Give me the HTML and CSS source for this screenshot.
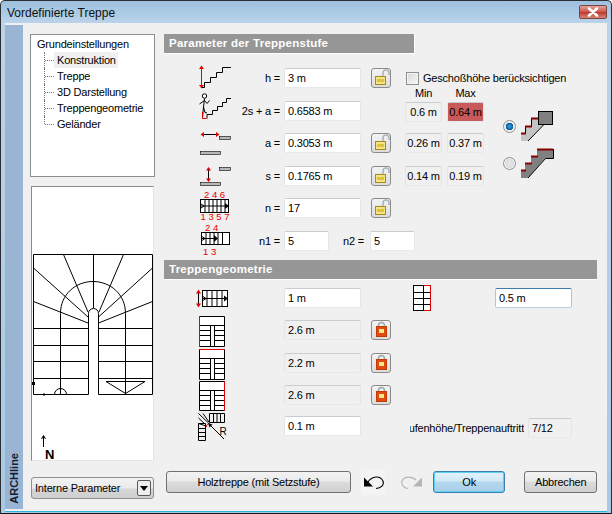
FILE: index.html
```html
<!DOCTYPE html>
<html lang="de">
<head>
<meta charset="utf-8">
<title>Vordefinierte Treppe</title>
<link rel="stylesheet" href="styles.css">
</head>
<body>
<div class="window">
  <header class="titlebar">
    <span class="title">Vordefinierte Treppe</span>
    <button class="close" aria-label="Schließen"><svg width="16" height="10" viewBox="0 0 16 10"><path d="M4 1.500 L12 8.500 M12 1.500 L4 8.500" stroke="#fff" stroke-width="2.600" stroke-linecap="round"/></svg></button>
  </header>
  <div class="client">
    <aside class="brand"><span class="brand-text">ARCHline</span></aside>
    <div class="left">
      <nav class="tree">
        <div class="tree-root">Grundeinstellungen</div>
        <ul class="tree-list">
          <li class="tree-item"><span class="tree-label is-selected">Konstruktion</span></li>
          <li class="tree-item"><span class="tree-label">Treppe</span></li>
          <li class="tree-item"><span class="tree-label">3D Darstellung</span></li>
          <li class="tree-item"><span class="tree-label">Treppengeometrie</span></li>
          <li class="tree-item"><span class="tree-label">Geländer</span></li>
        </ul>
      </nav>
      <div class="preview">
        <svg class="plan" width="123" height="275" viewBox="31 186 123 275">
          <g fill="none" stroke="#000" stroke-width="1">
            <path d="M88.500 394.500H33.500V254.500H152.500V394.500H98.500"/>
            <path d="M88.500 394.500V313.500A5 5 0 0 1 98.500 313.500V394.500"/>
            <path d="M60.500 394.500V313.500C60.500 294 76 281.500 93 281.500S125.500 294 125.500 313.500V394.500"/>
            <path d="M33.500 328.500H88.500M98.500 328.500H152.500M33.500 345.500H88.500M98.500 345.500H152.500M33.500 361.500H88.500M98.500 361.500H152.500M33.500 378.500H88.500M98.500 378.500H152.500"/>
            <path d="M93.500 254.500V308M63.500 254.500L88 312M123.500 254.500L99 312M33.500 268L88 317M152.500 268L98.500 317M33.500 301.500L88 323M152.500 301.500L98.500 323"/>
            <path d="M54.500 394.500A6 6 0 0 1 66.500 394.500"/>
            <path d="M106 381.500H145L125.500 393.500Z"/>
            <path d="M41 394.500H45M43.500 393L45 394.500L43.500 396"/>
            <path d="M43.500 447V436M41.500 439L43.500 435.500L45.500 439"/>
          </g>
          <rect x="32" y="382" width="3" height="3" fill="#000"/>
          <text class="plan-n" x="45" y="459">N</text>
        </svg>
      </div>
      <div class="combo">
        <span class="combo-text">Interne Parameter</span>
        <span class="combo-btn"><svg width="8" height="5" viewBox="0 0 8 5"><path d="M0 0H8L4 5Z" fill="#000"/></svg></span>
      </div>
    </div>
    <main class="right">
      <h2 class="section-bar section-bar-short">Parameter der Treppenstufe</h2>
      <section class="params">
        <div class="param-grid">
          <svg class="icon" width="38" height="33" viewBox="196 64 38 33">
            <path d="M201.500 68V86" stroke="#e00000" fill="none"/><path d="M199 69L201.500 65.500L204 69ZM199 85L201.500 88.500L204 85Z" fill="#e00000"/>
            <path d="M202 87.500H204.500V82.500H210.500V77.500H216.500V72.500H222.500V67.500H231" stroke="#000" fill="none"/>
          </svg>
          <label class="lab">h =</label><div class="field"><input class="inp" value="3 m"></div>
          <button class="lock"><svg width="18" height="18" viewBox="0 0 18 18"><path d="M11 7V4A3 3 0 0 1 17 4V6" fill="none" stroke="#a9b4bc" stroke-width="1.500"/><rect x="3.500" y="7.500" width="10" height="8" fill="#f3e488" stroke="#a88a18"/><rect x="5" y="10" width="7" height="3" fill="#dfc140"/></svg></button>

          <svg class="icon" width="38" height="32" viewBox="196 97 38 32">
            <path d="M207 118.500V114.500H212.500V110.500H217.500V106.500H222.500V102.500H226.500V98.500H231" stroke="#000" fill="none"/>
            <circle cx="204.500" cy="96" r="2.200" fill="#fff" stroke="#000"/>
            <path d="M204.500 98.500L203.500 107L205 112.500L207 113M203.500 107L202.500 118M199.500 104L204.500 100.500L207 103.500L209.500 100.500" stroke="#000" fill="none"/>
            <path d="M202.500 112V118.500H206.500" stroke="#d00000" fill="none"/>
          </svg>
          <label class="lab">2s + a =</label><div class="field"><input class="inp" value="0.6583 m"></div><span></span>

          <svg class="icon" width="38" height="33" viewBox="196 129 38 33">
            <path d="M203 134.500H217" stroke="#000" fill="none"/><path d="M204 132L200.500 134.500L204 137ZM216 132L219.500 134.500L216 137Z" fill="#e00000"/>
            <rect x="219.500" y="136.500" width="11" height="3" fill="#b8b8b8" stroke="#000" stroke-width=".6"/><rect x="200.500" y="151.500" width="20" height="3" fill="#b8b8b8" stroke="#000" stroke-width=".6"/>
          </svg>
          <label class="lab">a =</label><div class="field"><input class="inp" value="0.3053 m"></div>
          <button class="lock"><svg width="18" height="18" viewBox="0 0 18 18"><path d="M11 7V4A3 3 0 0 1 17 4V6" fill="none" stroke="#a9b4bc" stroke-width="1.500"/><rect x="3.500" y="7.500" width="10" height="8" fill="#f3e488" stroke="#a88a18"/><rect x="5" y="10" width="7" height="3" fill="#dfc140"/></svg></button>

          <svg class="icon" width="38" height="32" viewBox="196 162 38 32">
            <path d="M208.500 170V179" stroke="#000" fill="none"/><path d="M206 170.500L208.500 167L211 170.500ZM206 178.500L208.500 182L211 178.500Z" fill="#e00000"/>
            <rect x="219.500" y="167.500" width="11" height="3" fill="#b8b8b8" stroke="#000" stroke-width=".6"/><rect x="200.500" y="182.500" width="20" height="3" fill="#b8b8b8" stroke="#000" stroke-width=".6"/>
          </svg>
          <label class="lab">s =</label><div class="field"><input class="inp" value="0.1765 m"></div>
          <button class="lock"><svg width="18" height="18" viewBox="0 0 18 18"><path d="M11 7V4A3 3 0 0 1 17 4V6" fill="none" stroke="#a9b4bc" stroke-width="1.500"/><rect x="3.500" y="7.500" width="10" height="8" fill="#f3e488" stroke="#a88a18"/><rect x="5" y="10" width="7" height="3" fill="#dfc140"/></svg></button>

          <svg class="icon" width="38" height="33" viewBox="196 194 38 33">
            <text class="redtxt" x="204" y="198">2 4 6</text>
            <rect x="200.500" y="199.500" width="28" height="13" fill="#fff" stroke="#000"/>
            <path d="M205 199.500V212.500M209 199.500V212.500M213 199.500V212.500M217 199.500V212.500M221 199.500V212.500M225 199.500V212.500M200.500 206H226" stroke="#000" fill="none"/>
            <path d="M225 203L229 206L225 209Z" fill="#000"/><path d="M201 204L204 206L201 208" fill="none" stroke="#000"/>
            <text class="redtxt" x="200.500" y="220">1 3 5 7</text>
          </svg>
          <label class="lab">n =</label><div class="field"><input class="inp" value="17"></div>
          <button class="lock"><svg width="18" height="18" viewBox="0 0 18 18"><path d="M11 7V4A3 3 0 0 1 17 4V6" fill="none" stroke="#a9b4bc" stroke-width="1.500"/><rect x="3.500" y="7.500" width="10" height="8" fill="#f3e488" stroke="#a88a18"/><rect x="5" y="10" width="7" height="3" fill="#dfc140"/></svg></button>

          <svg class="icon" width="38" height="32" viewBox="196 227 38 32">
            <text class="redtxt" x="205" y="231">2 4</text>
            <rect x="201.500" y="232.500" width="28" height="12" fill="#fff" stroke="#000"/>
            <path d="M206 232.500V244.500M210 232.500V244.500M214 232.500V244.500M218 232.500V244.500M222.500 232.500V244.500M201.500 238.500H217" stroke="#000" fill="none"/>
            <path d="M214 235L218 238.500L214 242Z" fill="#000"/><path d="M202 236.500L205 238.500L202 240.500" fill="none" stroke="#000"/>
            <text class="redtxt" x="203" y="255">1 3</text>
          </svg>
          <label class="lab">n1 =</label>
          <div class="field field-pair"><input class="inp inp-small" value="5"><label class="lab lab-n2">n2 =</label><input class="inp inp-small" value="5"></div>
        </div>

        <div class="limits">
          <label class="check"><span class="checkbox"></span>Geschoßhöhe berücksichtigen</label>
          <div class="limits-body">
            <div class="mm-grid">
              <span class="mm-head">Min</span><span class="mm-head">Max</span>
              <span class="mm">0.6 m</span><span class="mm mm-alert">0.64 m</span>
              <span class="mm">0.26 m</span><span class="mm">0.37 m</span>
              <span class="mm">0.14 m</span><span class="mm">0.19 m</span>
            </div>
            <div class="kinds">
              <div class="kind">
                <span class="radio radio-on"></span>
                <svg width="36" height="32" viewBox="520 110 36 32">
                  <path d="M521 133H525V126H531V118H538V124H544L528 141H521Z" fill="#c4c4c4"/>
                  <rect x="538.500" y="111.500" width="14" height="13" fill="#808080" stroke="#000"/>
                  <path d="M544 124.500L528 141" stroke="#000" fill="none"/>
                  <path d="M525.500 133V126.500M531.500 126V118.500" stroke="#000" fill="none"/>
                  <path d="M521 133.500H526M525 126.500H532M531 118.500H538" stroke="#8a0000" stroke-width="2" fill="none"/>
                </svg>
              </div>
              <div class="kind">
                <span class="radio"></span>
                <svg width="36" height="32" viewBox="520 147 36 32">
                  <path d="M521 170H525V163H531V156H537V149H553V158.500H545L528 178H521Z" fill="#808080"/>
                  <path d="M553.500 149V158.500H545.500L528 178" stroke="#000" fill="none"/>
                  <path d="M521 170.500H526M525 163.500H532M531 156.500H538M537 149.500H553" stroke="#8a0000" stroke-width="2" fill="none"/>
                </svg>
              </div>
            </div>
          </div>
        </div>
      </section>

      <h2 class="section-bar">Treppengeometrie</h2>
      <section class="geo-grid">
        <svg class="icon" width="38" height="32" viewBox="196 284 38 32">
          <path d="M198.500 293V304" stroke="#000" fill="none"/><path d="M196 293.500L198.500 289.500L201 293.500ZM196 303.500L198.500 307.500L201 303.500Z" fill="#e00000"/>
          <rect x="202.500" y="290.500" width="25" height="16" fill="#fff" stroke="#000"/>
          <path d="M207 290.500V306.500M212 290.500V306.500M217 290.500V306.500M222 290.500V306.500M202.500 298.500H226" stroke="#000" fill="none"/>
          <path d="M224 295.500L228 298.500L224 301.500Z" fill="#000"/><path d="M203 296.500L206 298.500L203 300.500" fill="none" stroke="#000"/>
        </svg>
        <div class="field field-geo"><input class="inp" value="1 m"></div>
        <svg class="icon icon-small" width="18" height="32" viewBox="413 284 18 32">
          <rect x="413.500" y="285.500" width="17" height="25" fill="#fff" stroke="#000"/>
          <path d="M423.500 285.500V310.500M413.500 292.500H430.500M413.500 298.500H430.500M413.500 304.500H430.500" stroke="#000" fill="none"/>
          <path d="M423.500 285.500H430.500V310.500H423.500" stroke="#e00000" fill="none"/>
        </svg>
        <div class="field field-right"><input class="inp inp-focus" value="0.5 m"></div>

        <svg class="icon" width="38" height="33" viewBox="196 316 38 33">
          <path d="M199.500 316.500H224.500V346.500H199.500ZM199.500 325.500H224.500M210.500 325.500V346.500M214.500 325.500V346.500M199.500 330.500H210.500M214.500 330.500H224.500M199.500 335.500H210.500M214.500 335.500H224.500M199.500 340.500H210.500M214.500 340.500H224.500" fill="#fff" stroke="#000"/>
          <path d="M199.500 316.500V346.500" stroke="#e00000" fill="none"/>
        </svg>
        <div class="field field-geo"><input class="inp inp-ro" value="2.6 m" readonly></div>
        <button class="lock"><svg width="18" height="18" viewBox="0 0 18 18"><path d="M6.500 6V4.500A3 3 0 0 1 12.500 4.500V6" fill="none" stroke="#9ea6ab" stroke-width="1.500"/><rect x="4.500" y="5.500" width="10" height="10" fill="#e24a0e" stroke="#c23a06"/><rect x="7" y="8" width="5" height="4" fill="#f4e88a"/></svg></button>

        <svg class="icon" width="38" height="32" viewBox="196 349 38 32">
          <path d="M199.500 349.500H224.500V379.500H199.500ZM199.500 358.500H224.500M210.500 358.500V379.500M214.500 358.500V379.500M199.500 363.500H210.500M214.500 363.500H224.500M199.500 368.500H210.500M214.500 368.500H224.500M199.500 373.500H210.500M214.500 373.500H224.500" fill="#fff" stroke="#000"/>
          <path d="M199.500 349.500H224.500" stroke="#e00000" fill="none"/>
        </svg>
        <div class="field field-geo"><input class="inp inp-ro" value="2.2 m" readonly></div>
        <button class="lock"><svg width="18" height="18" viewBox="0 0 18 18"><path d="M6.500 6V4.500A3 3 0 0 1 12.500 4.500V6" fill="none" stroke="#9ea6ab" stroke-width="1.500"/><rect x="4.500" y="5.500" width="10" height="10" fill="#e24a0e" stroke="#c23a06"/><rect x="7" y="8" width="5" height="4" fill="#f4e88a"/></svg></button>

        <svg class="icon" width="38" height="31" viewBox="196 381 38 31">
          <path d="M199.500 381.500H224.500V410.500H199.500ZM199.500 390.500H224.500M210.500 390.500V410.500M214.500 390.500V410.500M199.500 395.500H210.500M214.500 395.500H224.500M199.500 400.500H210.500M214.500 400.500H224.500M199.500 405.500H210.500M214.500 405.500H224.500" fill="#fff" stroke="#000"/>
          <path d="M224.500 381.500V410.500" stroke="#e00000" fill="none"/>
        </svg>
        <div class="field field-geo"><input class="inp inp-ro" value="2.6 m" readonly></div>
        <button class="lock"><svg width="18" height="18" viewBox="0 0 18 18"><path d="M6.500 6V4.500A3 3 0 0 1 12.500 4.500V6" fill="none" stroke="#9ea6ab" stroke-width="1.500"/><rect x="4.500" y="5.500" width="10" height="10" fill="#e24a0e" stroke="#c23a06"/><rect x="7" y="8" width="5" height="4" fill="#f4e88a"/></svg></button>

        <svg class="icon" width="38" height="32" viewBox="196 412 38 32">
          <path d="M209.500 413.500H224.500V422.500H209.500ZM213.500 413.500V422.500M217 413.500V422.500M220.500 413.500V422.500M198.500 423.500H205.500V440.500H198.500ZM198.500 428.500H205.500M198.500 432.500H205.500M198.500 436.500H205.500" fill="none" stroke="#000"/>
          <path d="M198.500 413.500L208.500 423M203 413.500L209 422M198.500 418L206 425M198.500 423.500L206 426" stroke="#000" fill="none"/>
          <path d="M206.500 427A3 3 0 0 1 209.500 423.500" stroke="#e00000" fill="none"/>
          <path d="M224 439L209 424" stroke="#000" fill="none"/><path d="M208 423L212.500 424.500L209.500 427.500Z" fill="#000"/>
          <text class="rtxt" x="219.500" y="435">R</text>
        </svg>
        <div class="field field-geo"><input class="inp" value="0.1 m"></div>
        <div class="ratio">
          <div class="ratio-clip"><span class="ratio-label">Stufenhöhe/Treppenauftritt</span></div>
          <input class="inp inp-ro inp-ratio" value="7/12" readonly>
        </div>
      </section>

      <footer class="actions">
        <button class="btn btn-holz">Holztreppe (mit Setzstufe)</button>
        <span class="undo"><svg width="24" height="26" viewBox="362 473 24 26"><path d="M365 481.500V490.500H374Z" fill="#000"/><path d="M369 486C373 480 381 479 384 485C385.500 489 382 492 377 492.500" fill="none" stroke="#000" stroke-width="1.100"/></svg></span>
        <span class="redo"><svg width="22" height="26" viewBox="402 473 22 26"><path d="M423 481.500V490.500H414Z" fill="#b4b4b4"/><path d="M417 484C413 480 405 480 403 485C402 489 405 492 409 492.500" fill="none" stroke="#b4b4b4" stroke-width="1.100"/></svg></span>
        <button class="btn btn-ok">Ok</button>
        <button class="btn btn-cancel">Abbrechen</button>
      </footer>
    </main>
  </div>
</div>
</body>
</html>
```

FILE: styles.css
```css
* { box-sizing: border-box; }
html, body { margin: 0; padding: 0; }
body {
  width: 612px;
  height: 514px;
  overflow: hidden;
  font-family: "Liberation Sans", Arial, sans-serif;
  font-size: 11px;
  letter-spacing: -.2px;
  color: #000;
  background: #fff;
}
.window {
  width: 612px;
  height: 514px;
  display: flex;
  flex-direction: column;
  background: linear-gradient(#9cc0de, #bcd4ea 23px, #a9c9e3);
  border: 1px solid #2b2f33;
  border-bottom-color: #11181c;
  border-radius: 5px 5px 0 0;
}
.titlebar {
  height: 22px;
  flex: none;
  display: flex;
  align-items: center;
  justify-content: space-between;
  padding: 0 4px 0 6px;
}
.title { font-size: 12px; letter-spacing: 0; color: #111; padding-top: 2px; }
.close {
  width: 28px;
  height: 14px;
  padding: 0;
  display: flex;
  align-items: center;
  justify-content: center;
  border: 1px solid #7d4340;
  border-radius: 2px;
  background: linear-gradient(#e4a49a, #c9554a 50%, #c0392f 55%, #d9887a);
}
.client {
  flex: 1;
  min-height: 0;
  margin: 0 4px 2px;
  display: flex;
  background: #f0f0f0;
  box-shadow: 0 1px 0 #2fb4d8;
}
.brand {
  width: 18px;
  flex: none;
  margin: 2px 0;
  background: #9ab5d3;
  display: flex;
  align-items: flex-end;
  justify-content: center;
  padding-bottom: 5px;
}
.brand-text {
  writing-mode: vertical-rl;
  transform: rotate(180deg);
  font-size: 11px;
  letter-spacing: 0;
  font-weight: bold;
  color: #14202c;
}
.left {
  width: 125px;
  flex: none;
  margin-left: 7px;
  padding-top: 11px;
  display: flex;
  flex-direction: column;
}
.tree {
  height: 143px;
  flex: none;
  background: #fff;
  border: 1px solid #8a8f94;
  padding: 1px 0 0 6px;
}
.tree-root { height: 16px; line-height: 16px; }
.tree-list {
  list-style: none;
  margin: 0;
  padding: 0 0 0 7px;
}
.tree-item {
  height: 16px;
  display: flex;
  align-items: center;
  border-left: 1px dotted #777;
}
.tree-item:last-child { height: 8px; align-items: flex-start; }
.tree-item::before {
  content: "";
  width: 9px;
  flex: none;
  border-top: 1px dotted #777;
}
.tree-item:last-child::before { margin-top: 8px; }
.tree-label { padding: 0 2px 0 3px; height: 16px; line-height: 16px; flex: none; }
.is-selected { background: #f0f0f0; }
.preview {
  height: 275px;
  width: 123px;
  margin: 9px 0 0 1px;
  flex: none;
  background: #fff;
  border: 1px solid;
  border-color: #8a8a8a #e6e6e6 #e6e6e6 #8a8a8a;
  overflow: hidden;
}
.plan { display: block; margin: -1px; }
.plan-n { font: bold 13px "Liberation Sans", Arial, sans-serif; }
.combo {
  width: 123px;
  height: 22px;
  margin: 16px 0 0 1px;
  flex: none;
  display: flex;
  align-items: center;
  justify-content: space-between;
  padding: 0 2px 0 3px;
  border: 1px solid #8e8f8f;
  border-radius: 3px;
  background: linear-gradient(#f2f2f2, #ebebeb 50%, #d6d6d6 55%, #cfcfcf);
}
.combo-btn {
  width: 14px;
  height: 16px;
  display: flex;
  align-items: center;
  justify-content: center;
  border: 1px solid #555;
  border-radius: 2px;
  background: #eee;
}
.right {
  width: 433px;
  margin-left: 9px;
  padding-top: 11px;
  display: flex;
  flex-direction: column;
}
.section-bar {
  margin: 0;
  height: 20px;
  flex: none;
  line-height: 19px;
  padding-left: 5px;
  font-size: 11.500px;
  font-weight: bold;
  letter-spacing: .25px;
  color: #fff;
  background: #969696;
  border-bottom: 1px solid #fff;
}
.section-bar-short { width: 251px; border-right: 1px solid #fff; }
.params {
  height: 206px;
  flex: none;
  display: flex;
  padding: 10px 0 0 32px;
}
.param-grid {
  display: grid;
  grid-template-columns: 38px 50px 77px 30px;
  grid-template-rows: 33px 32px 33px 32px 33px 32px;
  width: 195px;
  flex: none;
}
.icon { display: block; overflow: visible; }
.lab {
  text-align: right;
  padding: 4px 4px 0 0;
  line-height: 20px;
}
.field { padding-top: 4px; }
.field-pair { display: flex; grid-column: span 2; }
.lab-n2 { width: 41px; padding-top: 0; padding-right: 6px; flex: none; }
.inp {
  display: block;
  width: 77px;
  height: 20px;
  padding: 0 3px;
  font: inherit;
  letter-spacing: inherit;
  color: #000;
  background: #fff;
  border: 1px solid;
  border-color: #c9cdd2 #e2e6ea #e6eaee #e2e6ea;
  border-radius: 2px;
  outline: none;
}
.inp-small { width: 45px; }
.inp-ro { background: #f0f0f0; }
.inp-focus { border-color: #3d7bad #a4c9e3 #b5cfe7 #a4c9e3; }
.lock {
  width: 20px;
  height: 20px;
  margin: 4px 0 0 10px;
  padding: 0;
  display: flex;
  align-items: center;
  justify-content: center;
  border: 1px solid #8a8a8a;
  border-radius: 3px;
  background: linear-gradient(#f4f4f4, #dcdcdc);
}
.lock svg { display: block; flex: none; }
.limits { margin-left: 14px; padding-top: 7px; }
.check { display: flex; align-items: center; gap: 4px; height: 14px; margin-left: 1px; white-space: nowrap; }
.checkbox {
  width: 13px;
  height: 13px;
  flex: none;
  border: 1px solid #8e8f8f;
  background: linear-gradient(135deg, #d8d8d8, #f8f8f8);
  box-shadow: inset 0 0 0 1px #f4f4f4;
}
.limits-body { display: flex; }
.mm-grid {
  display: grid;
  grid-template-columns: 37px 37px;
  grid-template-rows: 17px 31px 33px 20px;
  column-gap: 5px;
  align-items: start;
}
.mm-head { text-align: center; line-height: 17px; height: 17px; }
.mm {
  height: 20px;
  line-height: 18px;
  text-align: center;
  border: 1px solid;
  border-color: #c9cdd2 #e2e6ea #e6eaee #e2e6ea;
  border-radius: 2px;
  background: #f0f0f0;
  white-space: nowrap;
}
.mm-alert { background: #c85a5a; }
.kinds { margin-left: 19px; padding-top: 25px; display: flex; flex-direction: column; gap: 5px; }
.kind { display: flex; align-items: center; gap: 4px; height: 32px; }
.kind svg { display: block; flex: none; }
.radio {
  width: 13px;
  height: 13px;
  flex: none;
  border-radius: 50%;
  border: 1px solid #8e8f8f;
  background: radial-gradient(circle, #e8e8e8, #cfcfcf);
  box-shadow: inset 0 0 0 1px #f4f4f4;
}
.radio-on { background: radial-gradient(circle, #35a4e6 0, #0a5b9c 3.500px, #e8e8e8 4px); }
.geo-grid {
  height: 160px;
  flex: none;
  display: grid;
  grid-template-columns: 38px 50px 77px 30px 22px 18px 64px 77px;
  grid-template-rows: 32px 33px 32px 31px 32px;
  padding: 4px 0 0 32px;
}
.geo-grid > .icon { grid-column: 1; }
.geo-grid > .field-geo { grid-column: 3; }
.geo-grid > .lock { grid-column: 4; }
.geo-grid > .icon-small { grid-column: 6; }
.geo-grid > .field-right { grid-column: 8; }
.ratio {
  grid-column: 5 / 9;
  display: flex;
  align-items: flex-start;
  padding: 6px 0 0 19px;
  min-width: 0;
}
.ratio-clip {
  width: 114px;
  flex: none;
  overflow: hidden;
  display: flex;
  justify-content: flex-end;
  line-height: 20px;
}
.ratio-label { flex: none; white-space: nowrap; }
.inp-ratio { width: 44px; margin-left: 4px; }
.actions {
  margin-top: 29px;
  display: flex;
  align-items: center;
  height: 26px;
  padding-left: 2px;
}
.btn {
  height: 22px;
  padding: 0;
  font: inherit;
  letter-spacing: inherit;
  color: #000;
  border: 1px solid #707070;
  border-radius: 3px;
  background: linear-gradient(#f2f2f2, #ebebeb 45%, #dcdcdc 50%, #cfcfcf);
}
.btn-holz { width: 186px; }
.undo { width: 24px; height: 26px; margin-left: 10px; background: #f4f4f4; }
.redo { width: 22px; height: 26px; margin-left: 16px; }
.undo svg, .redo svg { display: block; }
.btn-ok {
  width: 73px;
  margin-left: 10px;
  border-color: #3c7fb1;
  background: linear-gradient(#e3f2fa, #d2e9f6 45%, #b4d8ee 50%, #a8cfe8);
  box-shadow: inset 0 0 0 1px #60d0f5;
}
.btn-cancel { width: 73px; margin-left: 19px; }
.redtxt { font: 9.500px "Liberation Sans", Arial, sans-serif; letter-spacing: 0; fill: #e80000; }
.rtxt { font: 10px "Liberation Sans", Arial, sans-serif; letter-spacing: 0; fill: #000; }
```
